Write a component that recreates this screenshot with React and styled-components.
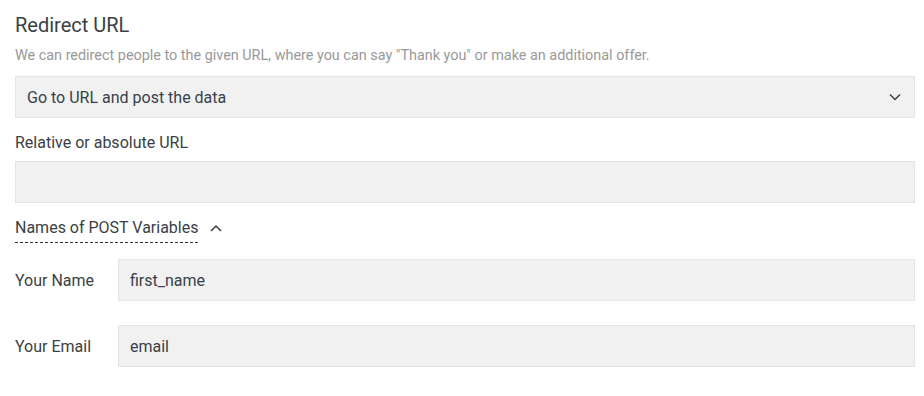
import { createGlobalStyle } from "styled-components";
import styled from "styled-components";

const GlobalStyle = createGlobalStyle`
  body {
    margin: 0;
    background: #fff;
    font-family: Roboto, "Liberation Sans", Arial, sans-serif;
    color: #333;
  }
`;

const Panel = styled.div`
  padding: 12px 9px 12px 15px;
  display: flex;
  flex-direction: column;
`;

const Title = styled.h3`
  margin: 0;
  font-size: 20px;
  font-weight: 400;
  line-height: 26px;
  color: #3a3f44;
`;

const Hint = styled.p`
  margin: 9px 0 0;
  font-size: 14.4px;
  line-height: 18px;
  color: #999;
`;

const Box = styled.div`
  box-sizing: border-box;
  height: 42px;
  margin-top: ${(p) => p.$gap || 0}px;
  flex: ${(p) => (p.$grow ? 1 : "none")};
  display: flex;
  align-items: center;
  justify-content: space-between;
  padding: 0 13px 0 11px;
  background: #f1f1f1;
  border: 1px solid #e4e4e4;
  font-size: 16px;
  color: #37414b;
`;

const Label = styled.div`
  margin-top: 16px;
  font-size: 16px;
  line-height: 18px;
  color: #3a3f44;
`;

const Toggle = styled.div`
  margin-top: 16px;
  display: flex;
  align-items: flex-start;
  gap: 12px;
  font-size: 16px;
  line-height: 18px;
  color: #3a3f44;

  svg {
    margin-top: 5px;
  }
`;

const Dashed = styled.span`
  padding-bottom: 5px;
  border-bottom: 1px dashed #333;
`;

const Row = styled.div`
  display: flex;
  align-items: center;
  margin-top: ${(p) => p.$gap}px;
`;

const RowLabel = styled.div`
  width: 103px;
  font-size: 16px;
  color: #3a3f44;
`;

const Chevron = ({ up }) => (
  <svg width="12" height="8" viewBox="0 0 12 8">
    <polyline
      points={up ? "1,7 6,2 11,7" : "1,1.5 6,6.5 11,1.5"}
      fill="none"
      stroke="#3a3f44"
      strokeWidth="1.5"
    />
  </svg>
);

export default function App() {
  return (
    <>
      <GlobalStyle />
      <Panel>
        <Title>Redirect URL</Title>
        <Hint>
          We can redirect people to the given URL, where you can say "Thank
          you" or make an additional offer.
        </Hint>
        <Box $gap={11}>
          <span>Go to URL and post the data</span>
          <Chevron />
        </Box>
        <Label>Relative or absolute URL</Label>
        <Box $gap={9} />
        <Toggle>
          <Dashed>Names of POST Variables</Dashed>
          <Chevron up />
        </Toggle>
        <Row $gap={16}>
          <RowLabel>Your Name</RowLabel>
          <Box $grow>first_name</Box>
        </Row>
        <Row $gap={24}>
          <RowLabel>Your Email</RowLabel>
          <Box $grow>email</Box>
        </Row>
      </Panel>
    </>
  );
}
